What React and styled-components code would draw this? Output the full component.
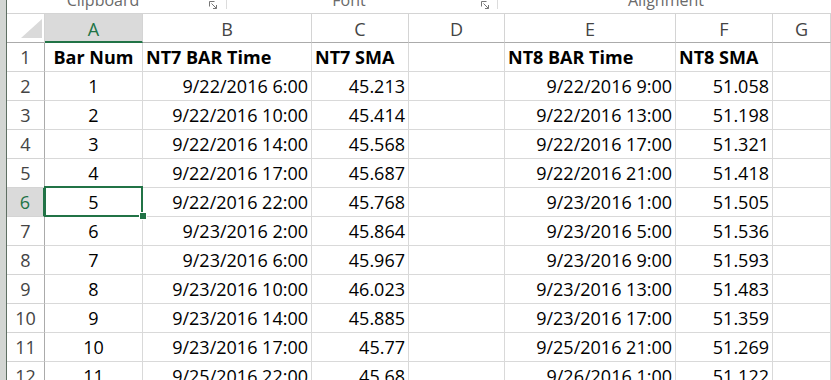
import React from "react";
import styled, { createGlobalStyle, css } from "styled-components";

const GlobalStyle = createGlobalStyle`
  html, body {
    margin: 0;
    padding: 0;
    background: #fff;
    overflow: hidden;
  }
  body {
    font-family: "Open Sans", "Liberation Sans", sans-serif;
  }
`;

const COLUMNS = ["A", "B", "C", "D", "E", "F", "G"];
const SELECTED_COL = "A";
const SELECTED_ROW = 6;

const HEADERS = ["Bar Num", "NT7 BAR Time", "NT7 SMA", "", "NT8 BAR Time", "NT8 SMA", ""];

const DATA = [
  [1, "9/22/2016 6:00", "45.213", "9/22/2016 9:00", "51.058"],
  [2, "9/22/2016 10:00", "45.414", "9/22/2016 13:00", "51.198"],
  [3, "9/22/2016 14:00", "45.568", "9/22/2016 17:00", "51.321"],
  [4, "9/22/2016 17:00", "45.687", "9/22/2016 21:00", "51.418"],
  [5, "9/22/2016 22:00", "45.768", "9/23/2016 1:00", "51.505"],
  [6, "9/23/2016 2:00", "45.864", "9/23/2016 5:00", "51.536"],
  [7, "9/23/2016 6:00", "45.967", "9/23/2016 9:00", "51.593"],
  [8, "9/23/2016 10:00", "46.023", "9/23/2016 13:00", "51.483"],
  [9, "9/23/2016 14:00", "45.885", "9/23/2016 17:00", "51.359"],
  [10, "9/23/2016 17:00", "45.77", "9/25/2016 21:00", "51.269"],
  [11, "9/25/2016 22:00", "45.68", "9/26/2016 1:00", "51.122"],
];

const GROUPS = [
  { name: "Clipboard", labelWidth: 192, launcher: true, right: 8 },
  { name: "Font", labelWidth: 244, launcher: true, right: 7 },
  { name: "Alignment", labelWidth: 336, launcher: false, right: 0 },
];

function Launcher() {
  return (
    <LauncherIcon width="9" height="9" viewBox="0 0 9 9">
      <path d="M0.5 5.5V0.5H5.5" fill="none" stroke="#777" strokeWidth="1" />
      <path d="M2.5 2.5L7.5 7.5M4 7.5H7.5V4" fill="none" stroke="#777" strokeWidth="1" />
    </LauncherIcon>
  );
}

function CornerCell() {
  return (
    <Corner>
      <svg width="21" height="19" viewBox="0 0 21 19">
        <polygon points="21,0 21,19 0,19" fill="#dadada" />
      </svg>
    </Corner>
  );
}

export default function App() {
  const rows = [HEADERS, ...DATA.map((d) => [d[0], d[1], d[2], "", d[3], d[4], ""])];

  return (
    <Page>
      <GlobalStyle />
      <EdgeStrip />
      <Sheet>
        <Ribbon>
          {GROUPS.map((g, i) => (
            <RibbonGroup key={g.name} $last={i === GROUPS.length - 1}>
              <GroupLabel $width={g.labelWidth}>{g.name}</GroupLabel>
              {g.launcher && <Launcher />}
              <Spacer $width={g.right} />
            </RibbonGroup>
          ))}
        </Ribbon>
        <Grid>
          <CornerCell />
          {COLUMNS.map((c) => (
            <ColHead key={c} $selected={c === SELECTED_COL}>
              {c}
            </ColHead>
          ))}
          {rows.map((row, r) => {
            const rowNum = r + 1;
            return (
              <React.Fragment key={rowNum}>
                <RowHead $selected={rowNum === SELECTED_ROW}>{rowNum}</RowHead>
                {row.map((value, c) => {
                  const isHeader = r === 0;
                  let align = "right";
                  if (c === 0) align = "center";
                  else if (isHeader) align = "left";
                  const active = rowNum === SELECTED_ROW && c === 0;
                  return (
                    <Cell key={c} $align={align} $bold={isHeader} $active={active}>
                      {value}
                      {active && <FillHandle />}
                    </Cell>
                  );
                })}
              </React.Fragment>
            );
          })}
        </Grid>
      </Sheet>
    </Page>
  );
}

const Page = styled.div`
  display: flex;
  width: 831px;
  height: 380px;
  overflow: hidden;
  background: #fff;
`;

const EdgeStrip = styled.div`
  width: 6px;
  flex-shrink: 0;
  background: #d3d6d3;
  border-right: 1px solid #5f6f63;
`;

const Sheet = styled.div`
  flex: 1;
  display: flex;
  flex-direction: column;
  min-width: 0;
`;

const Ribbon = styled.div`
  height: 14px;
  box-sizing: border-box;
  border-bottom: 1px solid #d4d4d4;
  display: flex;
  flex-shrink: 0;
  overflow: hidden;
  background: #fff;
`;

const RibbonGroup = styled.div`
  display: flex;
  align-items: flex-start;
  flex-shrink: 0;
  ${(p) =>
    !p.$last &&
    css`
      &::after {
        content: "";
        width: 1px;
        height: 9px;
        background: #dcdcdc;
      }
    `}
`;

const GroupLabel = styled.span`
  width: ${(p) => p.$width}px;
  text-align: center;
  font-family: "Open Sans", "Liberation Sans", sans-serif;
  font-size: 16px;
  line-height: 16px;
  margin-top: -8px;
  color: #6a6a6a;
  white-space: nowrap;
`;

const LauncherIcon = styled.svg`
  margin-left: 10px;
  margin-top: 1px;
  flex-shrink: 0;
`;

const Spacer = styled.span`
  width: ${(p) => p.$width}px;
  flex-shrink: 0;
`;

const Grid = styled.div`
  display: grid;
  grid-template-columns: 38px 98px 169px 97px 96px 171px 97px 1fr;
  grid-auto-rows: 29px;
  flex: 1;
  overflow: hidden;
`;

const Corner = styled.div`
  box-sizing: border-box;
  border-right: 1px solid #d4d4d4;
  border-bottom: 1px solid #ababab;
  display: flex;
  align-items: flex-end;
  justify-content: flex-end;
  padding: 0 2px 4px 0;
`;

const ColHead = styled.div`
  box-sizing: border-box;
  display: flex;
  align-items: flex-end;
  justify-content: center;
  padding-bottom: 1px;
  font-family: "Open Sans", "Liberation Sans", sans-serif;
  font-size: 18px;
  line-height: 24px;
  color: #444;
  border-right: 1px solid #d4d4d4;
  border-bottom: 1px solid #ababab;
  ${(p) =>
    p.$selected &&
    css`
      background: #dadada;
      color: #217346;
      border-bottom: 2px solid #217346;
      padding-bottom: 0;
    `}
`;

const RowHead = styled.div`
  box-sizing: border-box;
  display: flex;
  align-items: flex-end;
  justify-content: center;
  padding-bottom: 2px;
  font-family: "Open Sans", "Liberation Sans", sans-serif;
  font-size: 18px;
  line-height: 24px;
  color: #444;
  border-right: 1px solid #ababab;
  border-bottom: 1px solid #d4d4d4;
  ${(p) =>
    p.$selected &&
    css`
      background: #dadada;
      color: #217346;
      border-right: 2px solid #217346;
    `}
`;

const Cell = styled.div`
  box-sizing: border-box;
  position: relative;
  display: flex;
  align-items: flex-end;
  justify-content: ${(p) =>
    p.$align === "left" ? "flex-start" : p.$align === "center" ? "center" : "flex-end"};
  padding: 0 3px 2px 3px;
  font-family: "Open Sans", "Liberation Sans", sans-serif;
  font-size: 18px;
  line-height: 24px;
  font-weight: ${(p) => (p.$bold ? 700 : 400)};
  color: #000;
  white-space: nowrap;
  border-right: 1px solid #d9d9d9;
  border-bottom: 1px solid #d9d9d9;
  ${(p) =>
    p.$active &&
    css`
      &::after {
        content: "";
        position: absolute;
        top: -2px;
        left: -1px;
        right: -1px;
        bottom: -1px;
        border: 2px solid #217346;
        pointer-events: none;
      }
    `}
`;

const FillHandle = styled.span`
  position: absolute;
  right: -5px;
  bottom: -4px;
  width: 6px;
  height: 6px;
  background: #217346;
  border: 1px solid #fff;
  z-index: 2;
`;
